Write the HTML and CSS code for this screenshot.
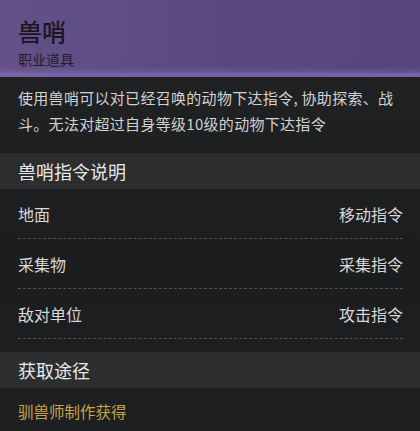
FILE: index.html
```html
<!DOCTYPE html>
<html lang="zh">
<head>
<meta charset="utf-8">
<link rel="stylesheet" href="styles.css">
</head>
<body>
<div class="panel">
  <header class="head">
    <h1 class="title">兽哨</h1>
    <div class="subtitle">职业道具</div>
  </header>
  <p class="desc">使用兽哨可以对已经召唤的动物下达指令, 协助探索、战斗。无法对超过自身等级10级的动物下达指令</p>
  <div class="section">兽哨指令说明</div>
  <ul class="rows">
    <li class="row"><span>地面</span><span>移动指令</span></li>
    <li class="row"><span>采集物</span><span>采集指令</span></li>
    <li class="row"><span>敌对单位</span><span>攻击指令</span></li>
  </ul>
  <div class="section section2">获取途径</div>
  <div class="source">驯兽师制作获得</div>
</div>
</body>
</html>
```
FILE: styles.css
```css
* { box-sizing: border-box; }
html, body { margin: 0; padding: 0; }
body {
  width: 420px;
  height: 431px;
  overflow: hidden;
  background: #1d1e1f;
  font-family: "Noto Sans CJK SC", "Noto Sans", sans-serif;
  color: #d6d6d6;
}
.panel {
  height: 431px;
  background: linear-gradient(180deg, #222324 0%, #1c1d1e 60%, #1e1f20 100%);
}
.head {
  height: 77px;
  padding: 15px 18px 0;
  background: linear-gradient(90deg, #64518a 0%, #5a4982 50%, #54457a 100%);
  border-bottom: 4px solid #7763a6;
  box-shadow: inset 0 -6px 6px -4px rgba(140,120,190,0.5);
}
.title {
  margin: 0;
  font-size: 24px;
  line-height: 32px;
  font-weight: 500;
  color: #1b1622;
}
.subtitle {
  margin-top: 3px;
  font-size: 14px;
  line-height: 18px;
  color: #231d2c;
}
.desc {
  margin: 0;
  padding: 8px 18px 0;
  height: 76px;
  font-size: 15px;
  line-height: 26px;
  letter-spacing: 0.3px;
  color: #d2d2d2;
}
.section {
  height: 36px;
  padding: 0 18px;
  background: #2c2d2e;
  font-size: 18px;
  line-height: 36px;
  color: #e8e8e8;
}
.rows {
  list-style: none;
  margin: 0;
  padding: 0 17px 0 18px;
}
.row {
  display: flex;
  justify-content: space-between;
  align-items: center;
  height: 50px;
  padding-top: 1px;
  border-bottom: 1px dashed #4e4f50;
  font-size: 16px;
  color: #d8d8d8;
}
.section2 { margin-top: 13px; }
.source {
  padding: 0 18px;
  height: 46px;
  font-size: 15.5px;
  line-height: 46px;
  color: #c6a54c;
}
```
